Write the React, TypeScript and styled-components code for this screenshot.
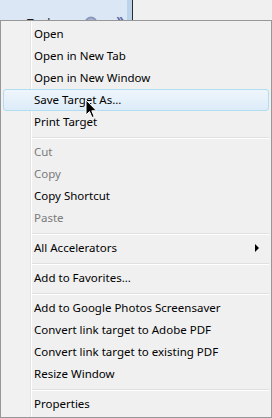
import styled, { createGlobalStyle } from "styled-components";

const GlobalStyle = createGlobalStyle`
  html, body {
    margin: 0;
    padding: 0;
    background: #f0f0f0;
  }
  body {
    font-family: "Noto Sans", "Open Sans", sans-serif;
  }
`;

const Page = styled.div`
  width: 272px;
  height: 418px;
  position: relative;
  overflow: hidden;
`;

const Toolbar = styled.div`
  display: flex;
  height: 34px;
`;

const ToolbarPane = styled.div`
  width: 127px;
  display: flex;
  align-items: flex-start;
  background: #dce7f5;
`;

const ToolsLabel = styled.span`
  margin: 16px 0 0 27px;
  font-size: 12px;
  line-height: 16px;
  color: #1e1e1e;
`;

const Gear = styled.svg`
  margin: 16px 0 0 28px;
  flex: none;
`;

const Chevrons = styled.span`
  margin: 12px 0 0 18px;
  font-size: 12px;
  line-height: 14px;
  font-weight: bold;
  color: #5a66a2;
`;

const Splitter = styled.div`
  width: 5px;
  background: #bcd3ec;
  border-right: 1px solid #2a2a2a;
`;

const ToolbarRest = styled.div`
  flex: 1;
  background: #f0f0f0;
`;

/* the context menu pops up over the toolbar */
const Menu = styled.div`
  position: absolute;
  left: 0;
  top: 20px;
  box-sizing: border-box;
  width: 272px;
  height: 398px;
  border: 1px solid #979797;
  padding: 2px;
  display: flex;
  flex-direction: column;
  background: linear-gradient(
    to right,
    #f1f1f1 0 29px,
    #e2e3e3 29px 30px,
    #ffffff 30px 31px,
    #f0f0f0 31px
  );
`;

const Item = styled.div<{ $disabled?: boolean; $hover?: boolean }>`
  box-sizing: border-box;
  height: 22px;
  display: flex;
  align-items: center;
  justify-content: space-between;
  padding: 0 9px 0 30px;
  font-size: 11.5px;
  line-height: 22px;
  color: ${(p) => (p.$disabled ? "#7b7b7b" : "#000")};
  border: 1px solid ${(p) => (p.$hover ? "#b2dcef" : "transparent")};
  border-radius: 3px;
  background: ${(p) =>
    p.$hover ? "linear-gradient(to bottom, #eff6fc, #dcecf8)" : "transparent"};
`;

const Arrow = styled.span`
  width: 0;
  height: 0;
  border-left: 4px solid #000;
  border-top: 4px solid transparent;
  border-bottom: 4px solid transparent;
`;

const Separator = styled.div`
  height: 8px;
  padding: 4px 0 0 29px;
  box-sizing: border-box;

  &::after {
    content: "";
    display: block;
    border-top: 1px solid #e0e0e0;
    border-bottom: 1px solid #ffffff;
  }
`;

const Cursor = styled.svg`
  position: absolute;
  left: 85px;
  top: 99px;
`;

type Entry =
  | { label: string; disabled?: boolean; hover?: boolean; submenu?: boolean }
  | "sep";

const entries: Entry[] = [
  { label: "Open" },
  { label: "Open in New Tab" },
  { label: "Open in New Window" },
  { label: "Save Target As...", hover: true },
  { label: "Print Target" },
  "sep",
  { label: "Cut", disabled: true },
  { label: "Copy", disabled: true },
  { label: "Copy Shortcut" },
  { label: "Paste", disabled: true },
  "sep",
  { label: "All Accelerators", submenu: true },
  "sep",
  { label: "Add to Favorites..." },
  "sep",
  { label: "Add to Google Photos Screensaver" },
  { label: "Convert link target to Adobe PDF" },
  { label: "Convert link target to existing PDF" },
  { label: "Resize Window" },
  "sep",
  { label: "Properties" },
];

export default function App() {
  return (
    <Page>
      <GlobalStyle />
      <Toolbar>
        <ToolbarPane>
          <ToolsLabel>Tools</ToolsLabel>
          <Gear width="14" height="14" viewBox="0 0 14 14">
            <circle cx="7" cy="7" r="6.5" fill="#8c97bd" />
            <circle cx="7" cy="7" r="4.5" fill="#aab3d2" />
            <circle cx="7" cy="7" r="2" fill="#dce7f5" />
          </Gear>
          <Chevrons>»</Chevrons>
        </ToolbarPane>
        <Splitter />
        <ToolbarRest />
      </Toolbar>
      <Menu>
        {entries.map((e, i) =>
          e === "sep" ? (
            <Separator key={i} />
          ) : (
            <Item key={i} $disabled={e.disabled} $hover={e.hover}>
              <span>{e.label}</span>
              {e.submenu && <Arrow />}
            </Item>
          )
        )}
      </Menu>
      <Cursor width="13" height="21" viewBox="0 0 13 21">
        <path
          d="M1 1 L1 16 L4.5 12.5 L7 18.5 L9.2 17.6 L6.8 11.8 L11.5 11.8 Z"
          fill="#000"
          stroke="#fff"
          strokeWidth="1"
          strokeLinejoin="round"
        />
      </Cursor>
    </Page>
  );
}
